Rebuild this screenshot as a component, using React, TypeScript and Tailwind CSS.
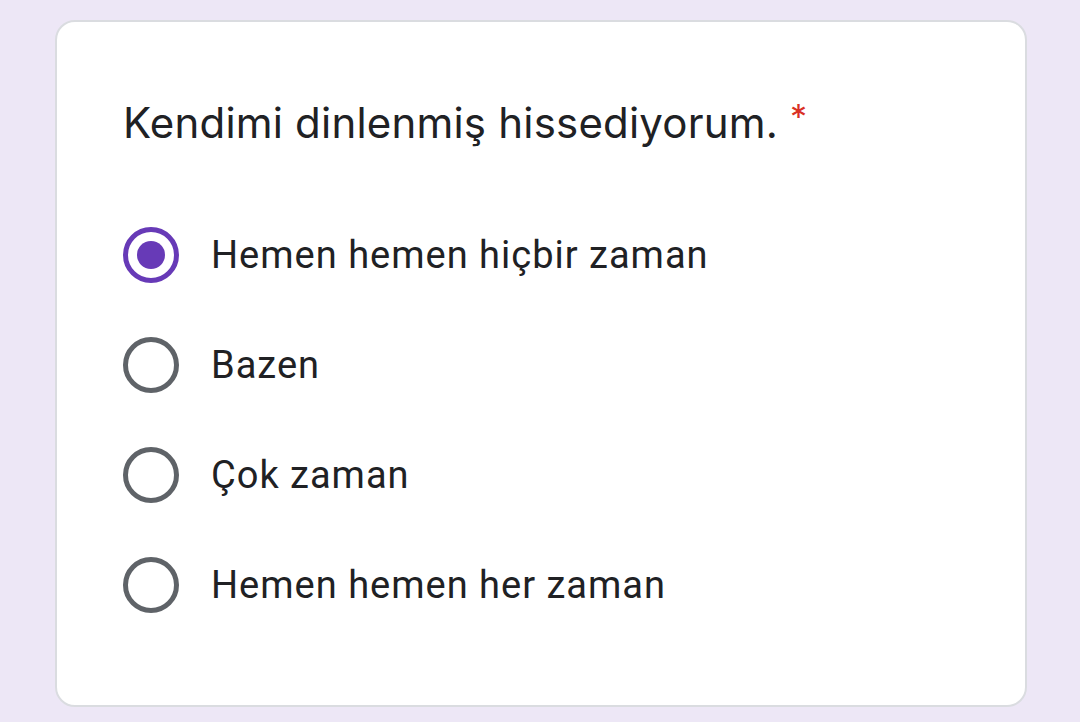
import React from 'react';

const OPTIONS = [
  'Hemen hemen hiçbir zaman',
  'Bazen',
  'Çok zaman',
  'Hemen hemen her zaman',
];

function Radio({ checked }: { checked: boolean }) {
  return (
    <span
      className={
        'flex h-[56px] w-[56px] shrink-0 items-center justify-center rounded-full border-[5px] ' +
        (checked ? 'border-[#673ab7]' : 'border-[#5f6368]')
      }
    >
      {checked && <span className="h-[28px] w-[28px] rounded-full bg-[#673ab7]" />}
    </span>
  );
}

export default function App() {
  const selected = 0;
  return (
    <div className="h-[722px] w-[1080px] overflow-hidden bg-[#ede7f6] pl-[55px] pt-[20px]">
      <div className="h-[687px] w-[972px] rounded-[20px] border-2 border-[#dadce0] bg-white pl-[66px] pt-[73px]">
        <div className="flex items-start font-['Inter',sans-serif] text-[42px] leading-[56px] tracking-[0.2px] text-[#202124]">
          <span>Kendimi dinlenmiş hissediyorum.</span>
          <span className="ml-[12px] mt-[-6px] text-[34px] text-[#d93025]">*</span>
        </div>
        <div className="mt-[49px] flex flex-col font-['Roboto',sans-serif]">
          {OPTIONS.map((label, i) => (
            <div key={label} className="flex h-[110px] items-center gap-[32px]">
              <Radio checked={i === selected} />
              <span className="text-[38px] tracking-[1px] text-[#202124]">{label}</span>
            </div>
          ))}
        </div>
      </div>
    </div>
  );
}
